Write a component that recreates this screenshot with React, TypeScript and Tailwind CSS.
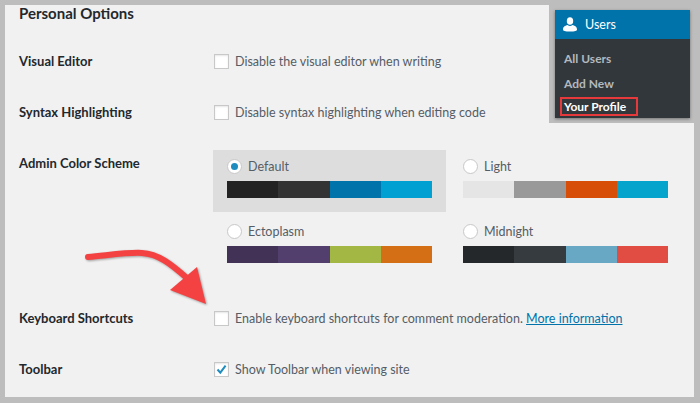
import React from "react";

const schemes = [
  { name: "Default", active: true, colors: ["bg-[#222222]", "bg-[#333333]", "bg-[#0073aa]", "bg-[#00a0d2]"] },
  { name: "Light", active: false, colors: ["bg-[#e5e5e5]", "bg-[#999999]", "bg-[#d64e07]", "bg-[#04a4cc]"] },
  { name: "Ectoplasm", active: false, colors: ["bg-[#413256]", "bg-[#523f6d]", "bg-[#a3b745]", "bg-[#d46f15]"] },
  { name: "Midnight", active: false, colors: ["bg-[#25282b]", "bg-[#363b3f]", "bg-[#69a8c4]", "bg-[#e14d43]"] },
];

const Checkbox = ({ checked = false }: { checked?: boolean }) => (
  <span className="flex h-[15px] w-[15px] shrink-0 items-center justify-center border border-[#c8c8c8] bg-white shadow-[inset_0_1px_2px_rgba(0,0,0,0.1)]">
    {checked && (
      <svg width="13" height="13" viewBox="0 0 13 13">
        <path d="M2.5 6.5 L5.3 9.6 L10.6 2.6" fill="none" stroke="#1e8cbe" strokeWidth="2" />
      </svg>
    )}
  </span>
);

const Row = ({ label, children }: { label: string; children: React.ReactNode }) => (
  <div className="flex h-[51px] items-center">
    <div className="w-[209px] pl-[14px] text-[13px] font-bold text-[#23282d]">{label}</div>
    <div className="flex items-center gap-[6px] text-[12.5px] text-[#555d66]">{children}</div>
  </div>
);

const Scheme = ({ name, active, colors }: { name: string; active: boolean; colors: string[] }) => (
  <div className={`h-[62px] px-[14px] pt-[9px] ${active ? "bg-[#dddddd]" : ""}`}>
    <div className="flex h-[15px] items-center gap-[6px] text-[12.5px] text-[#555d66]">
      <span className="flex h-[15px] w-[15px] items-center justify-center rounded-full border border-[#c8c8c8] bg-white">
        {active && <span className="h-[7px] w-[7px] rounded-full bg-[#1e8cbe]" />}
      </span>
      <span className="pt-[2px]">{name}</span>
    </div>
    <div className="mt-[7px] flex h-[17px] w-[205px]">
      {colors.map((c) => (
        <div key={c} className={`flex-1 ${c}`} />
      ))}
    </div>
  </div>
);

export default function App() {
  return (
    <div className="relative h-[403px] w-[700px] overflow-hidden bg-[#bdbdbd] p-[5px] font-['Lato',sans-serif]">
      <div className="h-[392px] w-[689px] bg-[#f1f1f1]">
        <div className="h-[16px] pl-[14px] text-[15px] leading-[16px] font-bold text-[#23282d]">
          Personal Options
        </div>
        <div className="h-[15px]" />
        <Row label="Visual Editor">
          <Checkbox />
          <span className="pt-[2px]">Disable the visual editor when writing</span>
        </Row>
        <Row label="Syntax Highlighting">
          <Checkbox />
          <span className="pt-[2px]">Disable syntax highlighting when editing code</span>
        </Row>
        <div className="mt-[12px] flex h-[127px]">
          <div className="w-[208px] pt-[4px] pl-[14px] text-[13px] font-bold text-[#23282d]">
            Admin Color Scheme
          </div>
          <div className="grid grid-cols-[233px_233px] gap-[3px]">
            {schemes.map((s) => (
              <Scheme key={s.name} {...s} />
            ))}
          </div>
        </div>
        <div className="h-[16px]" />
        <Row label="Keyboard Shortcuts">
          <Checkbox />
          <span className="pt-[2px]">
            Enable keyboard shortcuts for comment moderation.{" "}
            <span className="text-[#0073aa] underline">More information</span>
          </span>
        </Row>
        <Row label="Toolbar">
          <Checkbox checked />
          <span className="pt-[2px]">Show Toolbar when viewing site</span>
        </Row>
      </div>

      {/* submenu callout */}
      <div className="absolute top-0 right-0 h-[123px] w-[151px] bg-[#bdbdbd] pt-[10px] pl-[6px]">
        <div className="relative h-[108px] w-[135px] bg-[#32373c] font-bold shadow-[0_1px_3px_rgba(0,0,0,0.4)]">
          <div className="flex h-[29px] items-center gap-[8px] bg-[#0073aa] pl-[8px] text-[12.5px] font-normal text-white">
            <svg width="14" height="15" viewBox="0 0 14 15" fill="#fff">
              <ellipse cx="7" cy="4" rx="3.2" ry="3.8" />
              <path d="M0 12.5 C0 9.5 2.5 8.6 4.6 8 C6 9.2 8 9.2 9.4 8 C11.5 8.6 14 9.5 14 12.5 C14 14 12 14.6 7 14.6 C2 14.6 0 14 0 12.5 Z" />
            </svg>
            <span className="pt-[2px]">Users</span>
          </div>
          <div className="flex flex-col pt-[7px] pl-[9px] text-[12px] text-[#b4b9be]">
            <span className="h-[25px] leading-[25px]">All Users</span>
            <span className="h-[25px] leading-[25px]">Add New</span>
            <span className="h-[22px] leading-[22px] font-bold text-white">Your Profile</span>
          </div>
          <div className="absolute top-[87px] left-[5px] h-[19px] w-[78px] border-2 border-[#e5393b]" />
        </div>
      </div>

      {/* red arrow */}
      <svg
        className="absolute top-[245px] left-[80px] drop-shadow-[1px_1px_1px_rgba(0,0,0,0.35)]"
        width="135"
        height="65"
        viewBox="0 0 135 65"
      >
        <path d="M8 12 C30 10 50 7 62 8 C78 9 90 18 108 34" fill="none" stroke="#f44242" strokeWidth="6" strokeLinecap="round" />
        <path d="M117 22 L126 59 L90 45 Z" fill="#f44242" />
      </svg>
    </div>
  );
}
